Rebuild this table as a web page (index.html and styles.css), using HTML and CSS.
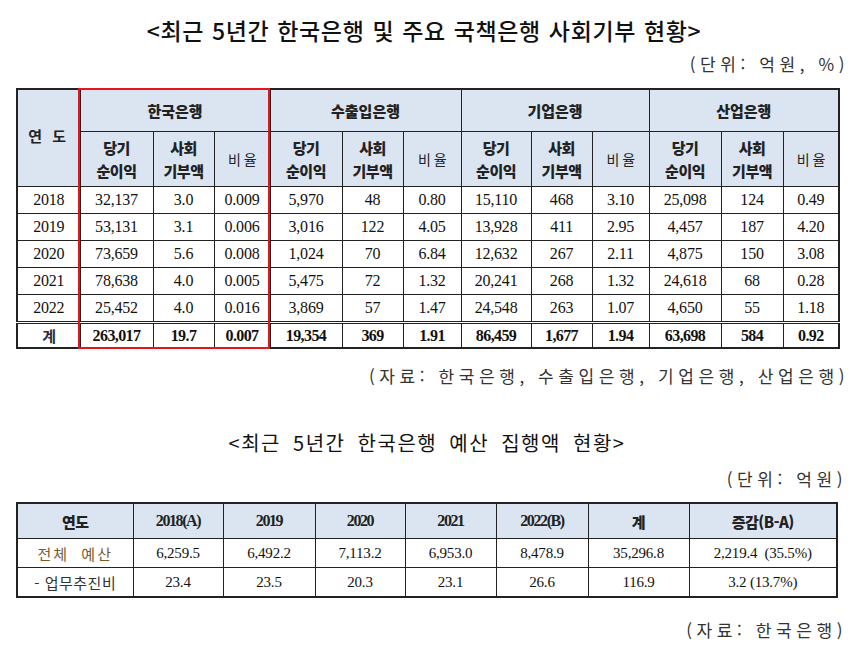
FILE: index.html
```html
<!DOCTYPE html>
<html lang="ko">
<head>
<meta charset="utf-8">
<link rel="stylesheet" href="styles.css">
</head>
<body>
<div class="page">
  <h1 class="title t1">&lt;최근 5년간 한국은행 및 주요 국책은행 사회기부 현황&gt;</h1>
  <div class="unit u1">(단위: 억원, %)</div>
  <div class="tbl-wrap">
    <table class="tbl1">
      <colgroup>
        <col style="width:63px"><col style="width:73px"><col style="width:61px"><col style="width:56px">
        <col style="width:72px"><col style="width:61px"><col style="width:58px">
        <col style="width:70px"><col style="width:61px"><col style="width:57px">
        <col style="width:72px"><col style="width:62px"><col style="width:56px">
      </colgroup>
      <thead>
        <tr class="h1">
          <th rowspan="2" class="yr">연 도</th>
          <th colspan="3">한국은행</th>
          <th colspan="3">수출입은행</th>
          <th colspan="3">기업은행</th>
          <th colspan="3">산업은행</th>
        </tr>
        <tr class="h2">
          <th>당기<br>순이익</th><th>사회<br>기부액</th><th class="ratio">비 율</th>
          <th>당기<br>순이익</th><th>사회<br>기부액</th><th class="ratio">비 율</th>
          <th>당기<br>순이익</th><th>사회<br>기부액</th><th class="ratio">비 율</th>
          <th>당기<br>순이익</th><th>사회<br>기부액</th><th class="ratio">비 율</th>
        </tr>
      </thead>
      <tbody>
        <tr><td>2018</td><td>32,137</td><td>3.0</td><td>0.009</td><td>5,970</td><td>48</td><td>0.80</td><td>15,110</td><td>468</td><td>3.10</td><td>25,098</td><td>124</td><td>0.49</td></tr>
        <tr><td>2019</td><td>53,131</td><td>3.1</td><td>0.006</td><td>3,016</td><td>122</td><td>4.05</td><td>13,928</td><td>411</td><td>2.95</td><td>4,457</td><td>187</td><td>4.20</td></tr>
        <tr><td>2020</td><td>73,659</td><td>5.6</td><td>0.008</td><td>1,024</td><td>70</td><td>6.84</td><td>12,632</td><td>267</td><td>2.11</td><td>4,875</td><td>150</td><td>3.08</td></tr>
        <tr><td>2021</td><td>78,638</td><td>4.0</td><td>0.005</td><td>5,475</td><td>72</td><td>1.32</td><td>20,241</td><td>268</td><td>1.32</td><td>24,618</td><td>68</td><td>0.28</td></tr>
        <tr class="last"><td>2022</td><td>25,452</td><td>4.0</td><td>0.016</td><td>3,869</td><td>57</td><td>1.47</td><td>24,548</td><td>263</td><td>1.07</td><td>4,650</td><td>55</td><td>1.18</td></tr>
        <tr class="total"><td class="kor">계</td><td>263,017</td><td>19.7</td><td>0.007</td><td>19,354</td><td>369</td><td>1.91</td><td>86,459</td><td>1,677</td><td>1.94</td><td>63,698</td><td>584</td><td>0.92</td></tr>
      </tbody>
    </table>
    <div class="highlight"></div>
  </div>
  <div class="source s1">(자료: 한국은행, 수출입은행, 기업은행, 산업은행)</div>

  <h2 class="title t2">&lt;최근 5년간 한국은행 예산 집행액 현황&gt;</h2>
  <div class="unit u2">(단위: 억원)</div>
  <table class="tbl2">
    <colgroup>
      <col style="width:116px"><col style="width:90px"><col style="width:92px"><col style="width:90px">
      <col style="width:91px"><col style="width:92px"><col style="width:101px"><col style="width:148px">
    </colgroup>
    <thead>
      <tr><th class="kor">연도</th><th>2018(A)</th><th>2019</th><th>2020</th><th>2021</th><th>2022(B)</th><th class="kor">계</th><th class="kor">증감(B-A)</th></tr>
    </thead>
    <tbody>
      <tr><td class="lbl brown">전체 예산</td><td>6,259.5</td><td>6,492.2</td><td>7,113.2</td><td>6,953.0</td><td>8,478.9</td><td>35,296.8</td><td>2,219.4 &nbsp;(35.5%)</td></tr>
      <tr><td class="lbl sub">- 업무추진비</td><td>23.4</td><td>23.5</td><td>20.3</td><td>23.1</td><td>26.6</td><td>116.9</td><td>3.2 (13.7%)</td></tr>
    </tbody>
  </table>
  <div class="source s2">(자료: 한국은행)</div>
</div>
</body>
</html>
```

FILE: styles.css
```css
html, body {
  margin: 0;
  padding: 0;
  background: #ffffff;
}
.page {
  width: 857px;
  padding: 0 19px 0 16px;
  box-sizing: border-box;
  font-family: "Noto Sans CJK KR", "Noto Sans", sans-serif;
  color: #111;
}
.title {
  margin: 0;
  text-align: center;
  font-weight: 500;
  color: #111;
}
.t1 {
  margin-top: 15px;
  font-size: 23px;
  line-height: 30px;
  letter-spacing: 0.6px;
  word-spacing: 1px;
  padding-right: 6px;
}
.t2 {
  margin-top: 43px;
  font-size: 20px;
  line-height: 28px;
  font-weight: 400;
  letter-spacing: 1.5px;
  word-spacing: 5px;
}
.unit, .source {
  text-align: right;
  font-size: 17px;
  line-height: 20px;
  letter-spacing: 4.6px;
  margin-right: -11px;
  color: #333;
  font-weight: 400;
}
.u1 { margin-top: 9px; }
.u2 { margin-top: 12px; margin-right: -9px; }
.s1 { margin-top: 17px; }
.s2 { margin-top: 22px; margin-right: -9px; }

.tbl-wrap {
  position: relative;
  margin-top: 14px;
  width: 822px;
}
table {
  border-collapse: collapse;
  table-layout: fixed;
  font-family: "Liberation Serif", "Noto Sans CJK KR", serif;
  color: #111;
}
.tbl1 {
  width: 822px;
  border: 2px solid #222;
}
.tbl1 th, .tbl1 td, .tbl2 th, .tbl2 td {
  border: 1px solid #222;
  padding: 0;
  text-align: center;
}
.tbl1 th, .tbl2 th {
  background: #dbe5f1;
  font-family: "Noto Sans CJK KR", sans-serif;
  font-weight: 900;
  font-size: 15px;
  color: #222;
}
.tbl1 .h1 th { height: 41px; }
.tbl1 .h2 th {
  height: 54px;
  line-height: 23px;
  font-size: 15px;
  letter-spacing: -0.5px;
}
.tbl1 th.yr {
  vertical-align: middle;
  padding-bottom: 6px;
  font-weight: 700;
  letter-spacing: 3px;
}
.tbl1 th.ratio {
  font-weight: 400;
  font-size: 14px;
}
.tbl1 td {
  height: 26px;
  font-size: 16px;
  letter-spacing: -0.2px;
}
.tbl1 tr.last td { border-bottom: 3px double #222; }
.tbl1 tr.total td {
  height: 23px;
  font-weight: 700;
  letter-spacing: -0.6px;
}
.tbl1 td.kor {
  font-family: "Noto Sans CJK KR", sans-serif;
  font-weight: 900;
  font-size: 15px;
  color: #2a2a44;
}
.highlight {
  position: absolute;
  left: 62px;
  top: 0;
  width: 192px;
  height: 100%;
  border: 2px solid #e8141a;
  box-sizing: border-box;
  pointer-events: none;
}

.tbl2 {
  margin-top: 13px;
  width: 820px;
  border: 2px solid #222;
}
.tbl2 th {
  height: 34px;
  font-family: "Liberation Serif", "Noto Sans CJK KR", serif;
  font-weight: 700;
  font-size: 16px;
  letter-spacing: -1.4px;
}
.tbl2 th.kor {
  font-family: "Noto Sans CJK KR", sans-serif;
  font-weight: 900;
  font-size: 15px;
  letter-spacing: -0.5px;
}
.tbl2 td {
  height: 28px;
  font-size: 15px;
  letter-spacing: -0.2px;
}
.tbl2 td.lbl {
  font-family: "Noto Sans CJK KR", sans-serif;
  font-size: 15px;
}
.tbl2 td.brown {
  color: #7a5a2c;
  letter-spacing: 2px;
  word-spacing: 6px;
}
.tbl2 td.sub {
  color: #333;
  letter-spacing: 0.5px;
}
```
